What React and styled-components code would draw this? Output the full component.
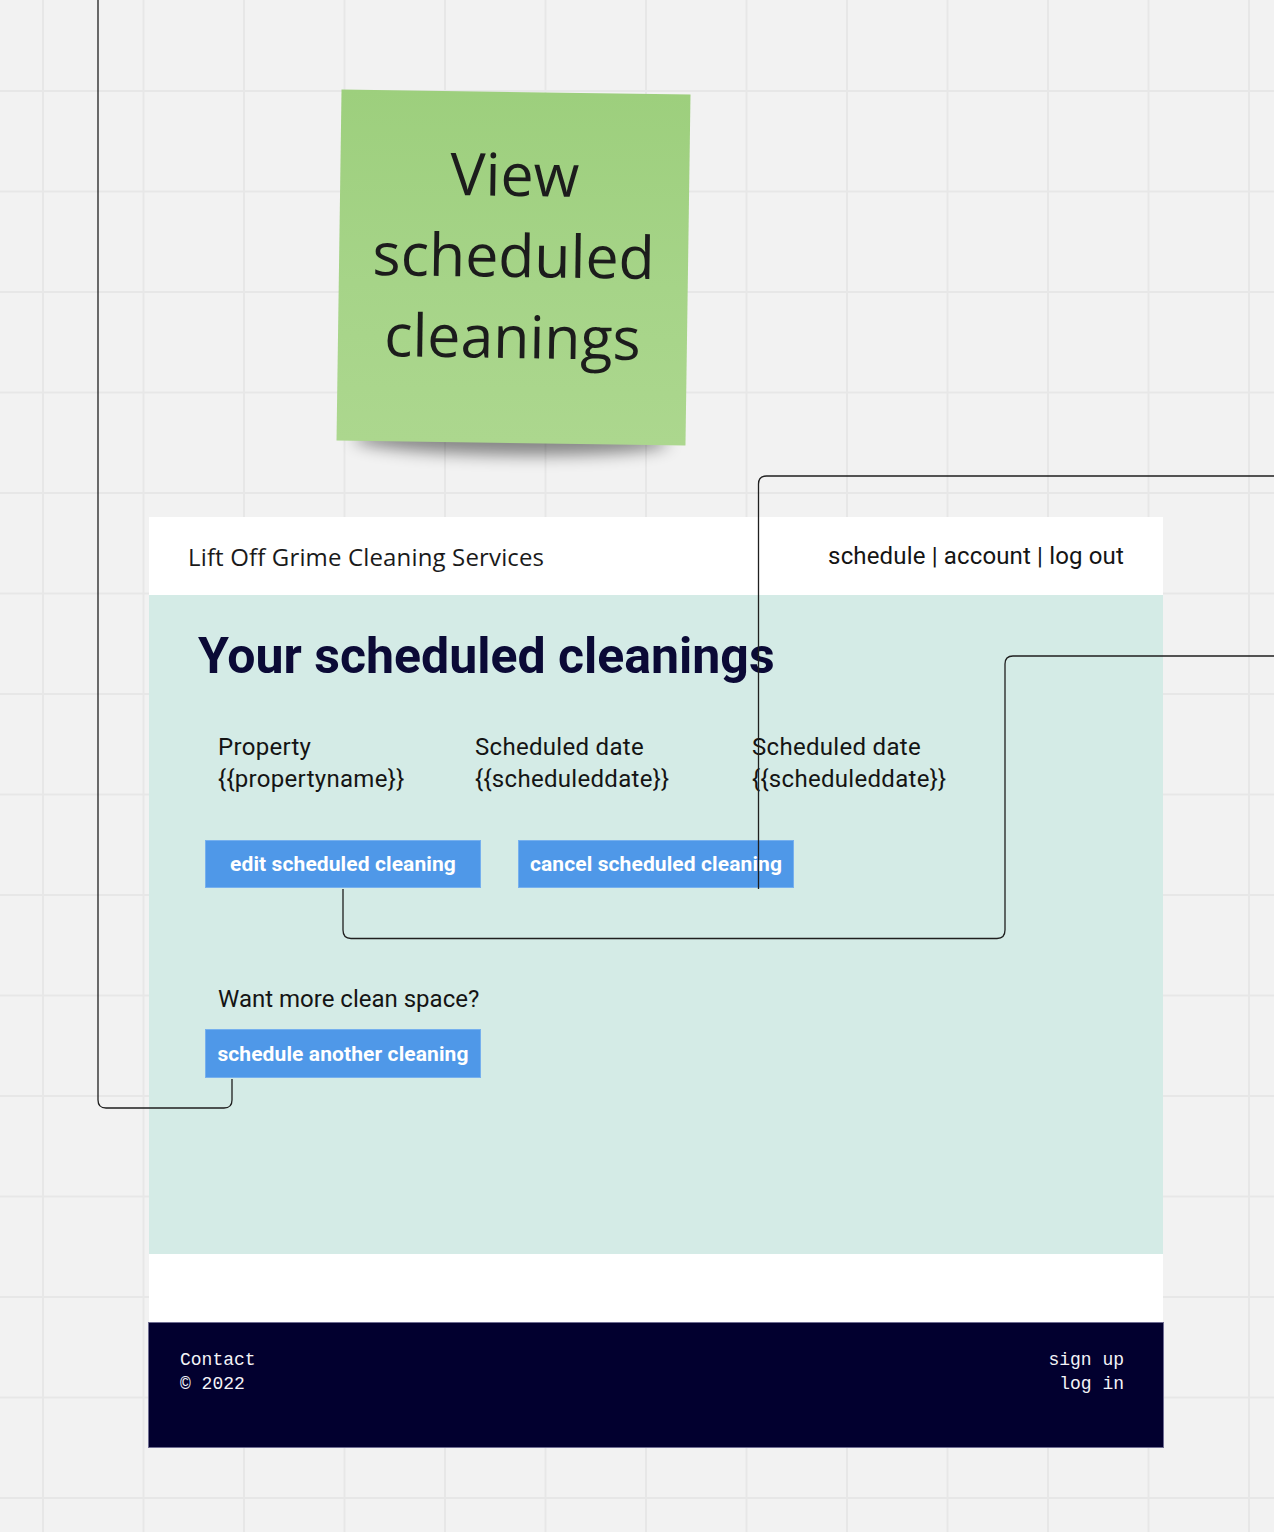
import React from 'react';
import styled, { createGlobalStyle } from 'styled-components';

const GlobalStyle = createGlobalStyle`
  html, body {
    margin: 0;
    padding: 0;
    background: #f2f2f2;
  }
`;

const Board = styled.div`
  position: relative;
  width: 1274px;
  height: 1532px;
  overflow: hidden;
  background-color: #f2f2f2;
  background-image:
    linear-gradient(to right, #e7e7e7 2px, transparent 2px),
    linear-gradient(to bottom, #e7e7e7 2px, transparent 2px);
  background-size: 100.5px 100.5px;
  background-position: 42px 90px;
  font-family: Roboto, "Noto Sans", sans-serif;
`;

// sticky note
const StickyWrap = styled.div`
  position: absolute;
  left: 339px;
  top: 92px;
  width: 349px;
  height: 351px;
  transform: rotate(0.82deg);
`;

const StickyShadow = styled.div`
  position: absolute;
  left: 5%;
  right: 5%;
  bottom: 8px;
  height: 30px;
  border-radius: 50%;
  box-shadow: 0 20px 16px rgba(0, 0, 0, 0.45);
`;

const Sticky = styled.div`
  position: relative;
  height: 100%;
  display: flex;
  align-items: center;
  justify-content: center;
  padding-bottom: 27px;
  box-sizing: border-box;
  background: linear-gradient(to bottom, #9dcf7d 0%, #a6d488 55%, #acd78e 100%);
  font-family: "Open Sans", sans-serif;
  font-size: 59px;
  line-height: 81px;
  color: #1c1c1c;
  text-align: center;
`;

// wireframe frame
const Frame = styled.div`
  position: absolute;
  left: 149px;
  top: 517px;
  width: 1014px;
  display: flex;
  flex-direction: column;
`;

const Header = styled.header`
  height: 78px;
  background: #ffffff;
  display: flex;
  align-items: center;
  justify-content: space-between;
  padding: 0 39px;
  box-sizing: border-box;
`;

const Brand = styled.div`
  font-family: "Open Sans", sans-serif;
  font-size: 24px;
  color: #1a1a1a;
  letter-spacing: 0.15px;
`;

const Nav = styled.nav`
  font-size: 24px;
  color: #141414;
  letter-spacing: 0.15px;
`;

const Body = styled.main`
  height: 659px;
  background: #d4ebe6;
  padding: 31px 0 0 49px;
  box-sizing: border-box;
`;

const Heading = styled.h1`
  margin: 0;
  font-size: 50px;
  line-height: 60px;
  font-weight: 700;
  color: #0b0a36;
`;

const Details = styled.div`
  margin-top: 45px;
  padding-left: 20px;
  display: grid;
  grid-template-columns: 257px 277px auto;
`;

const Detail = styled.div`
  font-size: 24px;
  line-height: 32px;
  color: #141414;
  letter-spacing: 0.3px;
`;

const ButtonRow = styled.div`
  margin-top: 45px;
  margin-left: 7px;
  display: flex;
  gap: 37px;
`;

const Button = styled.button`
  width: 276px;
  height: ${p => p.$tall ? 49 : 48}px;
  padding: 0;
  border: 1px solid #76b0ee;
  background: #4f98e8;
  color: #ffffff;
  font-family: Roboto, sans-serif;
  font-size: 21px;
  font-weight: 700;
  letter-spacing: ${p => p.$wide ? '0.1px' : '0.1px'};
  cursor: pointer;
`;

const Prompt = styled.p`
  margin: 95px 0 0 20px;
  font-size: 24px;
  line-height: 32px;
  color: #141414;
`;

const PromptAction = styled.div`
  margin: 14px 0 0 7px;
`;

const Spacer = styled.div`
  height: 68px;
  background: #ffffff;
`;

const Footer = styled.footer`
  height: 126px;
  margin: 0 -1px;
  background: #02002f;
  border: 1px solid #6f6d92;
  box-sizing: border-box;
  display: flex;
  justify-content: space-between;
  padding: 25px 39px 0 31px;
  font-family: "Liberation Mono", "DejaVu Sans Mono", monospace;
  font-size: 18px;
  line-height: 24px;
  color: #f4f4f8;
`;

const FooterCol = styled.div`
  text-align: ${p => p.$right ? 'right' : 'left'};
`;

// connector lines over the board
const Connectors = styled.svg`
  position: absolute;
  left: 0;
  top: 0;
  pointer-events: none;
`;

const connectorPaths = [
  'M98 0 V1100 Q98 1108 106 1108 H224 Q232 1108 232 1100 V1079',
  'M758.5 889 V484 Q758.5 476 766.5 476 H1280',
  'M343 889 V930 Q343 938.5 351 938.5 H997 Q1005 938.5 1005 930 V664 Q1005 656 1013 656 H1280',
];

const bookings = [
  { label: 'Property', value: '{{propertyname}}' },
  { label: 'Scheduled date', value: '{{scheduleddate}}' },
  { label: 'Scheduled date', value: '{{scheduleddate}}' },
];

export default function App() {
  return (
    <Board>
      <GlobalStyle />

      <StickyWrap>
        <StickyShadow />
        <Sticky>
          View<br />scheduled<br />cleanings
        </Sticky>
      </StickyWrap>

      <Frame>
        <Header>
          <Brand>Lift Off Grime Cleaning Services</Brand>
          <Nav>schedule | account | log out</Nav>
        </Header>

        <Body>
          <Heading>Your scheduled cleanings</Heading>
          <Details>
            {bookings.map((b, i) => (
              <Detail key={i}>
                {b.label}<br />{b.value}
              </Detail>
            ))}
          </Details>
          <ButtonRow>
            <Button>edit scheduled cleaning</Button>
            <Button>cancel scheduled cleaning</Button>
          </ButtonRow>
          <Prompt>Want more clean space?</Prompt>
          <PromptAction>
            <Button $tall $wide>schedule another cleaning</Button>
          </PromptAction>
        </Body>

        <Spacer />

        <Footer>
          <FooterCol>Contact<br />© 2022</FooterCol>
          <FooterCol $right>sign up<br />log in</FooterCol>
        </Footer>
      </Frame>

      <Connectors width="1274" height="1532" viewBox="0 0 1274 1532">
        {connectorPaths.map((d, i) => (
          <path key={i} d={d} fill="none" stroke="#1f1f1f" strokeWidth="1.3" />
        ))}
      </Connectors>
    </Board>
  );
}
